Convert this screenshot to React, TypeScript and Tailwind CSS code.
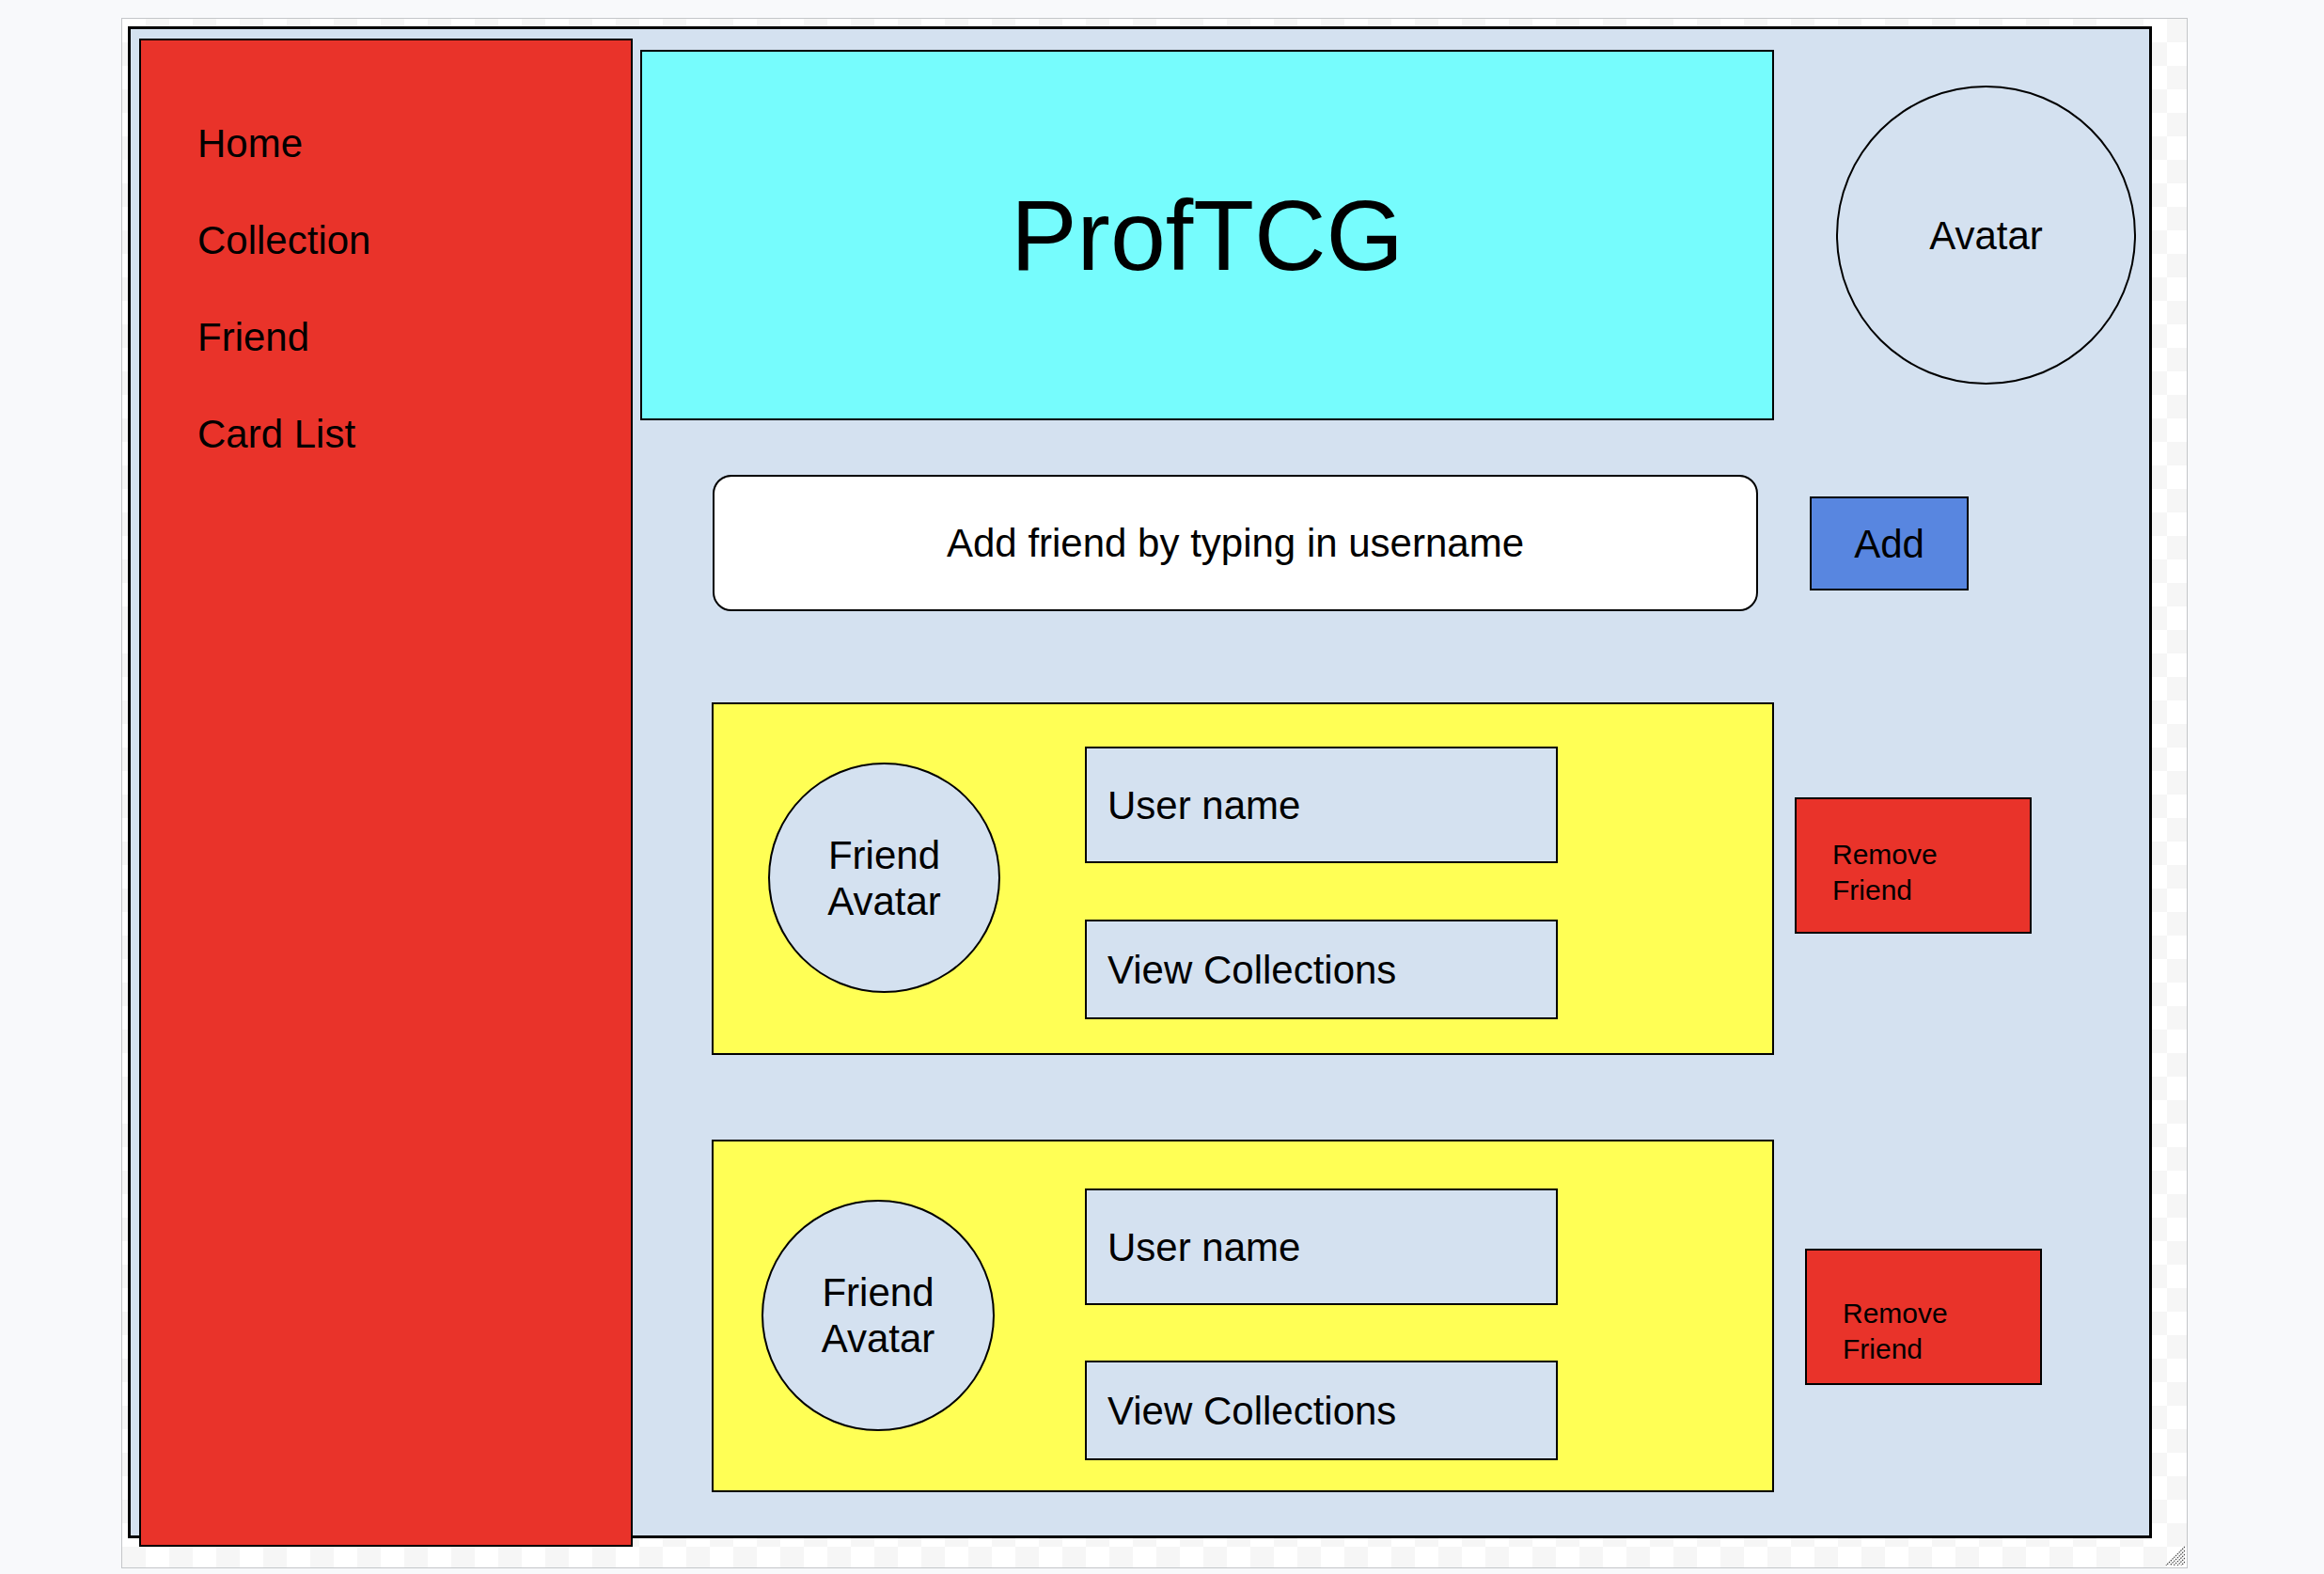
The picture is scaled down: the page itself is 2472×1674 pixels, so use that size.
const NAV = ["Home", "Collection", "Friend", "Card List"];

type FriendProps = {
  avatarClass: string;
  boxesClass: string;
  removeClass: string;
  removeTextClass: string;
};

const FriendRow = ({
  avatarClass,
  boxesClass,
  removeClass,
  removeTextClass,
}: FriendProps) => (
  <div className="flex items-start">
    <div className="ml-[76px] flex h-[375px] w-[1130px] shrink-0 items-start border-2 border-black bg-[#ffff55]">
      <div
        className={`flex shrink-0 items-center justify-center rounded-[50%] border-2 border-black bg-[#d4e1f0] text-center text-[42px] leading-[49px] ${avatarClass}`}
      >
        <span>
          Friend
          <br />
          Avatar
        </span>
      </div>
      <div className={`flex flex-col ${boxesClass}`}>
        <div className="flex h-[124px] w-[503px] items-center border-2 border-black bg-[#d4e1f0] pl-[22px] text-[42px]">
          User name
        </div>
        <div className="flex h-[106px] w-[503px] items-center border-2 border-black bg-[#d4e1f0] pl-[22px] text-[42px]">
          View Collections
        </div>
      </div>
    </div>
    <div
      className={`flex h-[145px] w-[252px] shrink-0 items-center border-2 border-black bg-[#e9332a] pl-[38px] text-[30px] leading-[38px] ${removeClass}`}
    >
      <div className={removeTextClass}>
        Remove
        <br />
        Friend
      </div>
    </div>
  </div>
);

const App = () => {
  return (
    <div className="min-h-screen bg-[#f8f9fb] pl-[129px] pt-[19px] font-['Liberation_Sans',Arial,sans-serif] text-black">
      <div className="relative h-[1649px] w-[2198px] border border-[#c4c6c9] bg-white bg-[image:repeating-conic-gradient(#f6f6f6_0_25%,#ffffff_0_50%)] bg-[length:50px_50px] pl-[6px] pt-[8px]">
        <div className="flex h-[1608px] w-[2153px] items-start border-[3px] border-black bg-[#d4e1f0] pl-[9px] pt-[10px]">
          <aside className="h-[1604px] w-[525px] shrink-0 border-2 border-black bg-[#e9332a] pl-[60px] pt-[58px]">
            <nav className="flex flex-col">
              {NAV.map((item) => (
                <a key={item} className="h-[103px] text-[42px] leading-[103px]">
                  {item}
                </a>
              ))}
            </nav>
          </aside>

          <main className="ml-[8px] mt-[12px] flex flex-col">
            <div className="flex items-start">
              <div className="flex h-[394px] w-[1206px] items-center justify-center border-2 border-black bg-[#76fcfd] text-[106px]">
                ProfTCG
              </div>
              <div className="ml-[66px] mt-[38px] flex h-[318px] w-[319px] items-center justify-center rounded-[50%] border-2 border-black text-[42px]">
                Avatar
              </div>
            </div>

            <div className="mt-[58px] flex items-start">
              <div className="ml-[77px] flex h-[145px] w-[1112px] items-center justify-center rounded-[20px] border-2 border-black bg-white text-[42px]">
                Add friend by typing in username
              </div>
              <button className="ml-[55px] mt-[23px] flex h-[100px] w-[169px] items-center justify-center border-2 border-black bg-[#5886e0] text-[42px]">
                Add
              </button>
            </div>

            <div className="mt-[97px]">
              <FriendRow
                avatarClass="ml-[58px] mt-[62px] h-[245px] w-[247px]"
                boxesClass="ml-[90px] mt-[45px] gap-[60px]"
                removeClass="ml-[22px] mt-[101px]"
                removeTextClass="pt-[14px]"
              />
            </div>

            <div className="mt-[90px]">
              <FriendRow
                avatarClass="ml-[51px] mt-[62px] h-[246px] w-[248px]"
                boxesClass="ml-[96px] mt-[50px] gap-[59px]"
                removeClass="ml-[33px] mt-[116px]"
                removeTextClass="pt-[30px]"
              />
            </div>
          </main>
        </div>

        <svg
          className="absolute bottom-[2px] right-[2px] h-[22px] w-[22px]"
          viewBox="0 0 22 22"
          stroke="#444"
          strokeWidth="1.2"
          strokeDasharray="1.5 1"
        >
          <path d="M22 2L2 22M22 6L6 22M22 10L10 22M22 14L14 22M22 18L18 22" />
        </svg>
      </div>
    </div>
  );
};

export default App;
